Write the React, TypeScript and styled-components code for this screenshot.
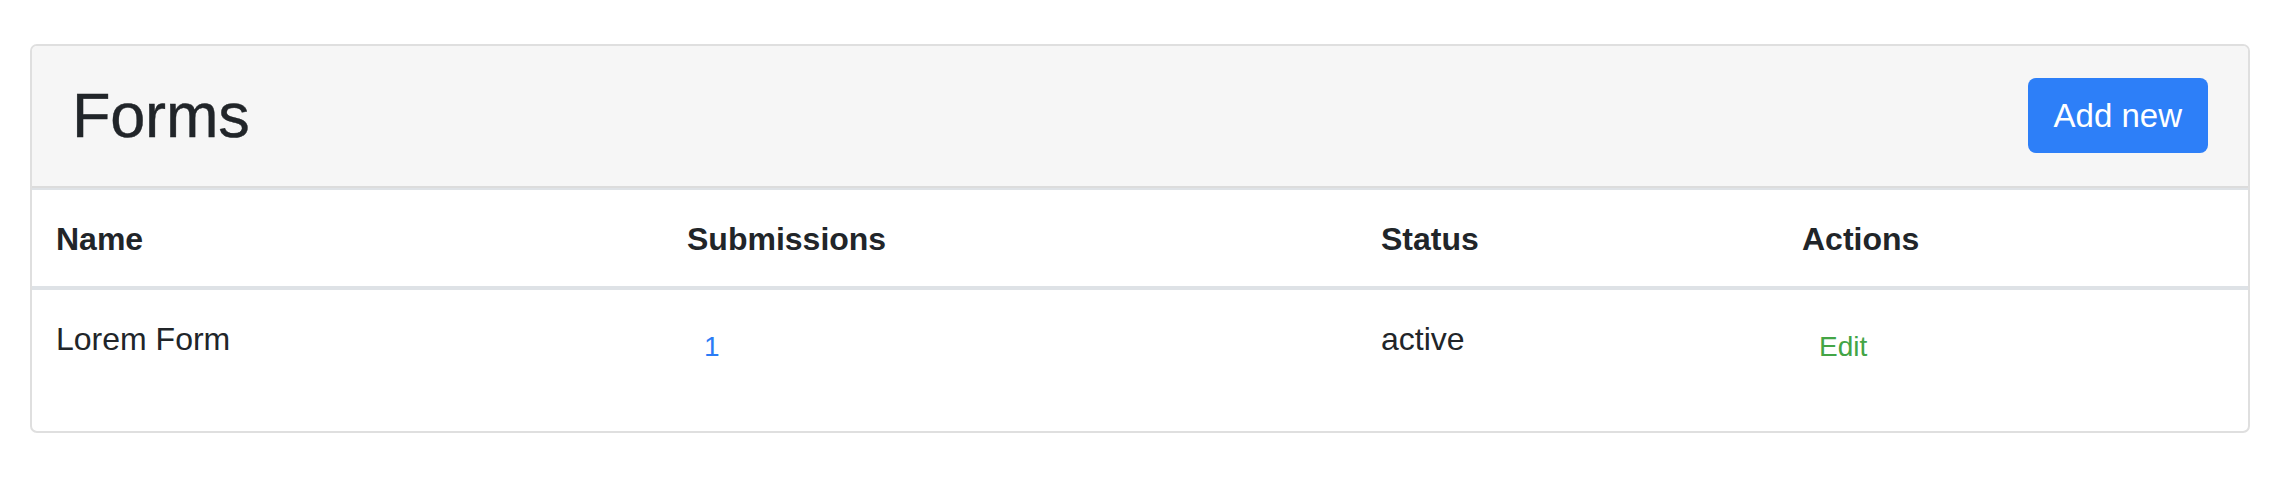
import React from "react";
import styled, { createGlobalStyle } from "styled-components";

const GlobalStyle = createGlobalStyle`
  html, body {
    margin: 0;
    padding: 0;
    background: #ffffff;
  }
  body {
    font-family: "Liberation Sans", Arial, sans-serif;
    color: #212529;
  }
  * { box-sizing: border-box; }
`;

const Page = styled.div`
  padding: 44px 46px 40px 30px;
`;

const Card = styled.section`
  width: 2220px;
  border: 2px solid #dfdfdf;
  border-radius: 7px;
  overflow: hidden;
  background: #ffffff;
`;

const CardHeader = styled.header`
  height: 142px;
  display: flex;
  align-items: center;
  justify-content: space-between;
  padding: 0 40px 0 40px;
  background: #f6f6f6;
  border-bottom: 2px solid #dcdcdc;
`;

const Title = styled.h2`
  margin: 0;
  font-size: 63px;
  font-weight: 400;
  line-height: 1.2;
  color: #212529;
  letter-spacing: -0.2px;
  -webkit-text-stroke: 0.4px #212529;
`;

const PrimaryButton = styled.button`
  height: 75px;
  padding: 0 26px;
  border: none;
  border-radius: 8px;
  background: #2d7ff8;
  color: #ffffff;
  font-family: "Liberation Sans", Arial, sans-serif;
  font-size: 33px;
  line-height: 1;
  cursor: pointer;
  margin-top: -1px;
`;

const Table = styled.div`
  display: grid;
  grid-template-columns: 631px 694px 421px 1fr;
  border-top: 2px solid #dee2e6;
`;

const HeadCell = styled.div`
  height: 100px;
  padding: 25px 24px 0;
  font-size: 32px;
  font-weight: 700;
  line-height: 48px;
  color: #212529;
  border-bottom: 4px solid #dee2e6;
`;

const BodyCell = styled.div`
  height: 141px;
  padding: 25px 24px 0;
  font-size: 32px;
  line-height: 48px;
  color: #212529;
`;

const LinkButton = styled.a<{ $tone: "primary" | "success" }>`
  display: inline-block;
  padding: 11px 17px 10px 17px;
  font-size: 28px;
  line-height: 42px;
  color: ${(p) => (p.$tone === "primary" ? "#2a7cf6" : "#43a546")};
  text-decoration: none;
  cursor: pointer;
  vertical-align: top;
`;

const columns = ["Name", "Submissions", "Status", "Actions"];

export default function App() {
  return (
    <>
      <GlobalStyle />
      <Page>
        <Card>
          <CardHeader>
            <Title>Forms</Title>
            <PrimaryButton>Add new</PrimaryButton>
          </CardHeader>
          <Table>
            {columns.map((c) => (
              <HeadCell key={c}>{c}</HeadCell>
            ))}
            <BodyCell>Lorem Form</BodyCell>
            <BodyCell>
              <LinkButton $tone="primary">1</LinkButton>
            </BodyCell>
            <BodyCell>active</BodyCell>
            <BodyCell>
              <LinkButton $tone="success">Edit</LinkButton>
            </BodyCell>
          </Table>
        </Card>
      </Page>
    </>
  );
}
